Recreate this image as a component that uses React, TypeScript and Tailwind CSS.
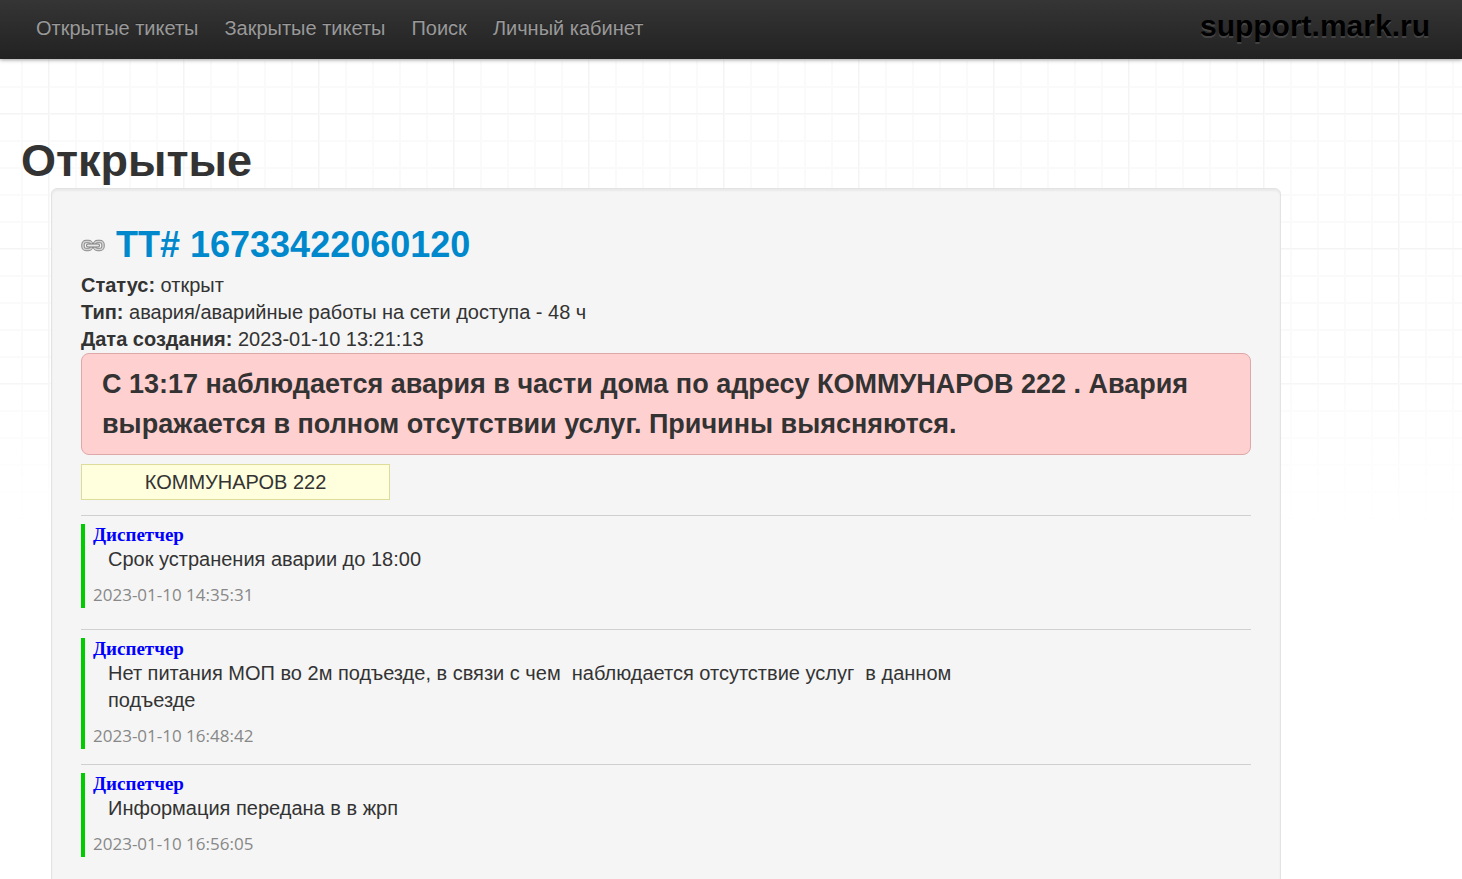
const navItems = ['Открытые тикеты', 'Закрытые тикеты', 'Поиск', 'Личный кабинет']

const comments = [
  { author: 'Диспетчер', text: 'Срок устранения аварии до 18:00', date: '2023-01-10 14:35:31' },
  {
    author: 'Диспетчер',
    text: 'Нет питания МОП во 2м подъезде, в связи с чем  наблюдается отсутствие услуг  в данном подъезде',
    date: '2023-01-10 16:48:42',
  },
  { author: 'Диспетчер', text: 'Информация передана в в жрп', date: '2023-01-10 16:56:05' },
]

function LinkIcon() {
  return (
    <svg width="24" height="16" viewBox="0 0 24 16" fill="none" aria-hidden="true">
      <rect x="2" y="4.5" width="8.5" height="8" rx="3" stroke="#8c8c8c" strokeWidth="3.5" />
      <rect x="13.5" y="4.5" width="8.5" height="8" rx="3" stroke="#8c8c8c" strokeWidth="3.5" />
      <rect x="2" y="4.5" width="8.5" height="8" rx="3" stroke="#d4d4d4" strokeWidth="1.5" />
      <rect x="13.5" y="4.5" width="8.5" height="8" rx="3" stroke="#d4d4d4" strokeWidth="1.5" />
      <path d="M7 8.5h10" stroke="#7c7c7c" strokeWidth="4" strokeLinecap="round" />
      <path d="M7 8.5h10" stroke="#e8e8e8" strokeWidth="2" strokeLinecap="round" />
    </svg>
  )
}

function Navbar() {
  return (
    <header className="flex h-[59px] items-start justify-between bg-linear-to-b from-[#353535] to-[#222222] pl-[23px] pr-8 shadow-[0_1px_4px_rgba(0,0,0,0.35)]">
      <nav className="flex">
        {navItems.map((item) => (
          <a
            key={item}
            href="#"
            className="px-[13px] pt-[15px] text-[20px] leading-[27px] text-[#999999] text-shadow-[0_-1px_0_rgba(0,0,0,0.25)]"
          >
            {item}
          </a>
        ))}
      </nav>
      <a
        href="#"
        className="pt-2 text-[30px] font-bold leading-9 text-black text-shadow-[0_2px_0_rgba(255,255,255,0.15)]"
      >
        support.mark.ru
      </a>
    </header>
  )
}

function Comment({ author, text, date }: { author: string; text: string; date: string }) {
  return (
    <li className="min-h-[114px] border-t border-[#d0d0d0] pb-[15px] pt-2">
      <div className="border-l-4 border-[#00cc00] pl-2">
        <div className="font-['Liberation_Serif',serif] text-[19px] font-bold leading-[22px] text-[#0000ff]">
          {author}
        </div>
        <p className="w-3/4 whitespace-pre-wrap pl-[15px]">{text}</p>
        <time className="mt-2 block font-['Open_Sans',sans-serif] text-[17px] text-[#888888]">{date}</time>
      </div>
    </li>
  )
}

export default function App() {
  return (
    <div className="relative min-h-screen bg-white font-['Liberation_Sans',Arial,sans-serif] text-[20px] leading-[27px] text-[#333333]">
      {/* notebook grid that fades out down the page */}
      <div className="pointer-events-none absolute inset-x-0 top-0 h-[540px] bg-[linear-gradient(to_bottom,rgba(255,255,255,0)_65%,#fff_98%),linear-gradient(to_right,#f4f4f4_1px,#f9f9f9_1px,#f9f9f9_2px,transparent_2px),linear-gradient(to_bottom,#f4f4f4_1px,#f9f9f9_1px,#f9f9f9_2px,transparent_2px),linear-gradient(to_right,#fafafa_2px,transparent_2px),linear-gradient(to_bottom,#fafafa_2px,transparent_2px)] bg-size-[100%_100%,135px_135px,135px_135px,27px_27px,27px_27px] bg-position-[0_0,48px_0,0_113px,21px_0,0_5px]" />

      <div className="relative">
        <Navbar />
        <main className="pt-[75px]">
          <h1 className="pl-[21px] text-[45px] font-bold leading-[54px]">Открытые</h1>

          <section className="ml-[51px] mr-[181px] rounded-md border border-[#e3e3e3] bg-[#f5f5f5] p-[29px] shadow-[inset_0_2px_2px_rgba(0,0,0,0.05)]">
            <h2 className="flex items-center gap-[11px] text-[36px] font-bold leading-[54px]">
              <LinkIcon />
              <a href="#" className="text-[#0088cc]">
                TT# 16733422060120
              </a>
            </h2>
            <p>
              <b>Статус:</b> открыт
            </p>
            <p>
              <b>Тип:</b> авария/аварийные работы на сети доступа - 48 ч
            </p>
            <p>
              <b>Дата создания:</b> 2023-01-10 13:21:13
            </p>

            <div className="rounded-lg border border-[#dfa8a8] bg-[#ffd0d0] px-5 py-[10px] text-[27px] font-bold leading-10">
              С 13:17 наблюдается авария в части дома по адресу КОММУНАРОВ 222 . Авария выражается в полном
              отсутствии услуг. Причины выясняются.
            </div>

            <div className="mt-[9px] w-[309px] border border-[#dddd99] bg-[#ffffdd] py-1 text-center leading-[26px]">
              КОММУНАРОВ 222
            </div>

            <ul className="mt-[15px]">
              {comments.map((comment) => (
                <Comment key={comment.date} {...comment} />
              ))}
            </ul>
          </section>
        </main>
      </div>
    </div>
  )
}
